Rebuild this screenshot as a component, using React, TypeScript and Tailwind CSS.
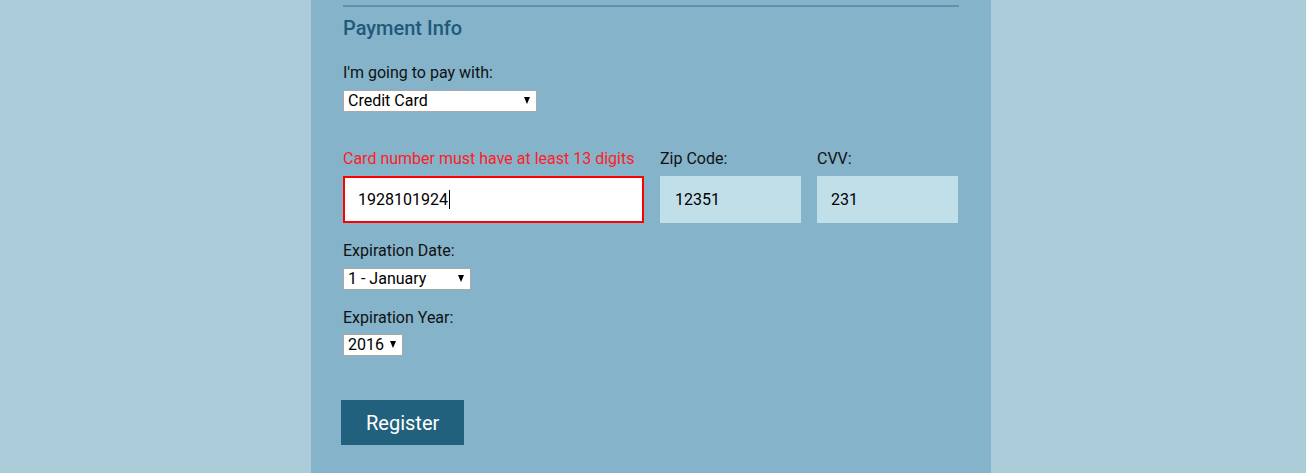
import { ReactNode } from "react";

const font = { fontFamily: "Roboto, 'Liberation Sans', sans-serif" };

function Label({ children, error }: { children: ReactNode; error?: boolean }) {
  return (
    <label
      className={`block text-[16px] leading-[19px] ${error ? "text-[#ff1d25]" : "text-[#111]"}`}
    >
      {children}
    </label>
  );
}

function Select({ value, width }: { value: string; width: string }) {
  return (
    <div className={`relative ${width} h-[22px] bg-white border border-[#a9a9a9]`}>
      <div className="pl-[4px] text-[16px] leading-[20px] text-black">{value}</div>
      {/* dropdown arrow */}
      <span className="absolute right-[6px] top-[6px] w-0 h-0 border-l-[3.5px] border-r-[3.5px] border-t-[7px] border-l-transparent border-r-transparent border-t-black" />
    </div>
  );
}

export default function App() {
  return (
    <div className="min-h-[473px] bg-[#abcbd8] flex" style={font}>
      <div className="ml-[311px] w-[680px] bg-[#84b3ca] px-[32px] pt-[5px] pb-[28px]">
        <div className="border-t-2 border-[#5f93ad]" />
        <h2 className="mt-[9px] text-[20px] leading-[24px] font-medium text-[#21597a]">Payment Info</h2>

        <div className="mt-[23px]">
          <Label>I'm going to pay with:</Label>
          <div className="mt-[8px]">
            <Select value="Credit Card" width="w-[194px]" />
          </div>
        </div>

        <div className="mt-[37px] flex gap-[16px]">
          <div className="w-[301px]">
            <Label error>Card number must have at least 13 digits</Label>
            <div className="mt-[8px] h-[47px] bg-white border-2 border-[#ff0000] pl-[13px] flex items-center text-[16px] text-black">
              1928101924
              <span className="ml-px inline-block w-px h-[19px] bg-black" />
            </div>
          </div>
          <div className="w-[141px]">
            <Label>Zip Code:</Label>
            <div className="mt-[8px] h-[47px] bg-[#c1dfe9] pl-[15px] flex items-center text-[16px] text-black">
              12351
            </div>
          </div>
          <div className="w-[141px]">
            <Label>CVV:</Label>
            <div className="mt-[8px] h-[47px] bg-[#c1dfe9] pl-[14px] flex items-center text-[16px] text-black">
              231
            </div>
          </div>
        </div>

        <div className="mt-[18px]">
          <Label>Expiration Date:</Label>
          <div className="mt-[8px]">
            <Select value="1 - January" width="w-[128px]" />
          </div>
        </div>

        <div className="mt-[18px]">
          <Label>Expiration Year:</Label>
          <div className="mt-[7px]">
            <Select value="2016" width="w-[60px]" />
          </div>
        </div>

        <button className="mt-[44px] -ml-[2px] h-[45px] px-[25px] bg-[#22617e] text-white text-[20px]">
          Register
        </button>
      </div>
    </div>
  );
}
